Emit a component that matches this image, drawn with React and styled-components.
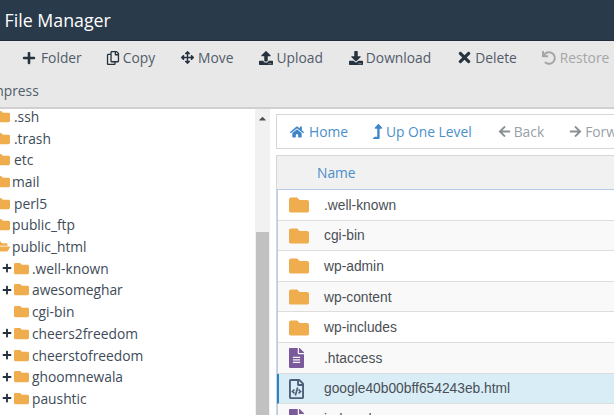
import React from "react";
import styled, { createGlobalStyle } from "styled-components";
import {
  FaPlus, FaRegCopy, FaArrowsAlt, FaUpload, FaDownload, FaTimes, FaUndo, FaHome,
  FaLevelUpAlt, FaArrowLeft, FaArrowRight, FaFolder, FaFolderOpen, FaFileAlt, FaRegFileCode, FaCaretUp,
} from "react-icons/fa";

const Global = createGlobalStyle`
  html, body { margin: 0; padding: 0; width: 614px; height: 415px; overflow: hidden; background: #fff; }
  body { font-family: "Open Sans", "Liberation Sans", sans-serif; }
`;
const Page = styled.div`width: 614px; height: 415px; overflow: hidden; display: flex; flex-direction: column;`;
const Header = styled.header`
  height: 40px; flex: none; background: #293a4a; color: #fff; display: flex; align-items: center;
  padding-left: 4.5px; font-size: 17.8px; border-bottom: 1px solid #1f2d3a;
`;
const Toolbar = styled.div`
  height: 66px; flex: none; background: #e8e8e8; border-bottom: 2px solid #d0d0d0; display: flex; flex-direction: column; overflow: hidden;
`;
const ToolRow = styled.div`height: 33px; flex: none; display: flex; align-items: center; padding-left: 22px; white-space: nowrap;`;
const ToolRowSecond = styled(ToolRow)`padding-left: 0; margin-left: -26px;`;
const Tool = styled.span`
  display: inline-flex; align-items: center; gap: ${p => p.$gap ?? 5}px; font-size: 13.8px; margin-right: ${p => p.$mr ?? 0}px;
  color: ${p => p.$off ? "#a6a6a6" : "#515c6a"};
  svg { color: ${p => p.$off ? "#a6a6a6" : "#26323e"}; font-size: ${p => p.$size ?? 14}px; flex: none; }
`;
const Main = styled.div`flex: 1; display: flex; min-height: 0;`;
const TreePane = styled.div`width: 255px; flex: none; overflow: hidden;`;
const TreeList = styled.div`margin-top: -3.4px;`;
const TreeRow = styled.div`
  height: 21.7px; display: flex; align-items: center; white-space: nowrap; font-size: 13.8px; color: #404b58;
  margin-left: ${p => p.$child ? 2 : -5}px;
`;
const Toggle = styled.span`
  width: 12px; flex: none; display: inline-flex; align-items: center; color: #26323e; font-size: 10px;
`;
const TreeFolder = styled.span`
  display: inline-flex; color: #f0ad4e; font-size: 15px; margin-right: ${p => p.$gap}px; flex: none;
`;
const Scrollbar = styled.div`
  width: 15px; flex: none; background: #f1f1f1; display: flex; flex-direction: column; align-items: center;
`;
const ScrollArrow = styled.div`height: 18px; display: flex; align-items: center; color: #505050; font-size: 11px; flex: none;`;
const ScrollThumb = styled.div`width: 13px; margin-top: 105px; flex: 1; background: #c1c1c1;`;
const Content = styled.div`flex: 1; min-width: 0; padding: 5px 0 0 6px; overflow: hidden;`;
const Nav = styled.nav`
  height: 35px; box-sizing: border-box; border: 1px solid #d6d6d6; border-right: 0; display: flex; align-items: center; padding-left: 13px; white-space: nowrap; overflow: hidden;
`;
const NavLink = styled.span`
  display: inline-flex; align-items: center; gap: ${p => p.$gap}px; font-size: 13.8px; margin-right: ${p => p.$mr}px;
  color: ${p => p.$off ? "#98a0a8" : "#4a8fc9"};
  svg { color: ${p => p.$off ? "#8a8f94" : "#3d85c6"}; font-size: ${p => p.$size ?? 13}px; flex: none; }
`;
const Table = styled.div`margin-top: 6px; border: 1px solid #d6d6d6; border-right: 0; border-bottom: 0;`;
const TableHead = styled.div`
  height: 34px; background: #f1f1f1; display: flex; align-items: center; padding-left: 40px; font-size: 13.8px; color: #4a8fc9;
  border-bottom: 1px solid #b5cde8; box-sizing: border-box;
`;
const Rows = styled.div`border-left: 1px solid #b5cde8;`;
const Row = styled.div`
  height: 30.6px; box-sizing: border-box; display: flex; align-items: center; padding: 1px 0 0 ${p => p.$selected ? 10 : 11}px;
  background: ${p => p.$selected ? "#d9edf7" : p.$odd ? "#f9f9f9" : "#fff"};
  border-bottom: 1px solid #ddd; ${p => p.$selected ? "border-left: 2px solid #1e88c9; margin-left: -1px;" : ""}
  font-family: "Liberation Sans", Arial, sans-serif; font-size: 13.8px; color: #4a4f55; white-space: nowrap;
`;
const RowIcon = styled.span`
  width: 35px; flex: none; display: inline-flex; align-items: center; font-size: 20px; color: ${p => p.$color};
  svg { width: ${p => p.$narrow ? "0.75em" : "1em"}; }
`;

const tree = [
  { name: ".ssh", gap: 4 }, { name: ".trash", gap: 4 }, { name: "etc", gap: 4 }, { name: "mail", gap: 2 },
  { name: "perl5", gap: 4 }, { name: "public_ftp", gap: 2 }, { name: "public_html", gap: 2, open: true },
  { name: ".well-known", child: true, plus: true }, { name: "awesomeghar", child: true, plus: true },
  { name: "cgi-bin", child: true }, { name: "cheers2freedom", child: true, plus: true },
  { name: "cheerstofreedom", child: true, plus: true }, { name: "ghoomnewala", child: true, plus: true },
  { name: "paushtic", child: true, plus: true },
];
const files = [
  { name: ".well-known" }, { name: "cgi-bin" }, { name: "wp-admin" }, { name: "wp-content" }, { name: "wp-includes" },
  { name: ".htaccess", type: "text" }, { name: "google40b00bff654243eb.html", type: "code" }, { name: "index.php", type: "text" },
];
const FileGlyph = ({ type }) => {
  if (type === "text") return <RowIcon $narrow $color="#7b5a9b"><FaFileAlt /></RowIcon>;
  if (type === "code") return <RowIcon $narrow $color="#4d5f78"><FaRegFileCode /></RowIcon>;
  return <RowIcon $color="#f0ad4e"><FaFolder /></RowIcon>;
};

export default function App() {
  return (
    <Page>
      <Global />
      <Header>File Manager</Header>
      <Toolbar>
        <ToolRow>
          <Tool $mr={24}><FaPlus />Folder</Tool>
          <Tool $mr={26} $gap={3}><FaRegCopy />Copy</Tool>
          <Tool $mr={26} $gap={4} $size={13}><FaArrowsAlt />Move</Tool>
          <Tool $mr={26} $gap={3}><FaUpload />Upload</Tool>
          <Tool $mr={25} $gap={3}><FaDownload />Download</Tool>
          <Tool $mr={25} $gap={2} $size={17}><FaTimes />Delete</Tool>
          <Tool $off $gap={4}><FaUndo />Restore</Tool>
        </ToolRow>
        <ToolRowSecond><Tool>Compress</Tool></ToolRowSecond>
      </Toolbar>
      <Main>
        <TreePane>
          <TreeList>
            {tree.map(t => (
              <TreeRow key={t.name} $child={t.child}>
                {t.child && <Toggle>{t.plus && <FaPlus />}</Toggle>}
                <TreeFolder $gap={t.gap ?? 3}>{t.open ? <FaFolderOpen /> : <FaFolder />}</TreeFolder>
                {t.name}
              </TreeRow>
            ))}
          </TreeList>
        </TreePane>
        <Scrollbar>
          <ScrollArrow><FaCaretUp /></ScrollArrow>
          <ScrollThumb />
        </Scrollbar>
        <Content>
          <Nav>
            <NavLink $mr={22} $gap={5} $size={14}><FaHome />Home</NavLink>
            <NavLink $mr={26} $gap={1} $size={15}><FaLevelUpAlt />Up One Level</NavLink>
            <NavLink $mr={25} $gap={3} $off><FaArrowLeft />Back</NavLink>
            <NavLink $mr={0} $gap={3} $off><FaArrowRight />Forward</NavLink>
          </Nav>
          <Table>
            <TableHead>Name</TableHead>
            <Rows>
              {files.map((f, i) => (
                <Row key={f.name} $odd={i % 2 === 1} $selected={f.type === "code"}>
                  <FileGlyph type={f.type} />
                  {f.name}
                </Row>
              ))}
            </Rows>
          </Table>
        </Content>
      </Main>
    </Page>
  );
}
